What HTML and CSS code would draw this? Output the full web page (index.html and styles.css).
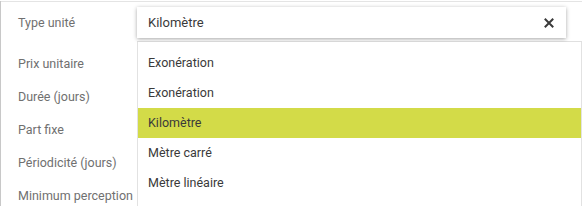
FILE: index.html
```html
<!DOCTYPE html>
<html lang="fr">
<head>
  <meta charset="UTF-8" />
  <title>Type unité</title>
  <link rel="stylesheet" href="styles.css">
</head>
<body>

<div class="form">
  <div class="row first">
    <span class="label">Type unité</span>
    <div class="field">
      <div class="select">
        <span class="value">Kilomètre</span>
        <svg class="clear" width="10" height="10" viewBox="0 0 10 10">
          <path d="M1.5 1.5 L8.5 8.5 M8.5 1.5 L1.5 8.5" stroke="#3a3a3a" stroke-width="2" stroke-linecap="square" />
        </svg>
      </div>
    </div>
  </div>
  <div class="labels">
    <span class="label">Prix unitaire</span>
    <span class="label">Durée (jours)</span>
    <span class="label">Part fixe</span>
    <span class="label">Périodicité (jours)</span>
    <span class="label">Minimum perception</span>
  </div>

  <ul class="dropdown">
    <li>Exonération</li>
    <li>Exonération</li>
    <li class="selected">Kilomètre</li>
    <li>Mètre carré</li>
    <li>Mètre linéaire</li>
  </ul>
</div>

</body>
</html>
```

FILE: styles.css
```css
html, body {
  margin: 0; padding: 0;
  font-family: Roboto, 'Liberation Sans', Arial, sans-serif;
  background: #ffffff;
  color: #333333;
  height: 100%;
  overflow: hidden;
}

.form {
  position: relative;
  height: 206px;
  border-left: 1px solid #c8c8c8;
  box-sizing: border-box;
}

.label {
  display: flex;
  align-items: center;
  padding-left: 17px;
  font-size: 12.5px;
  color: #707070;
}

.row.first {
  display: grid;
  grid-template-columns: 136px 1fr;
  height: 40px;
  margin-top: 1px;
  border-top: 1px solid #e4e4e4;
}

.row.first .field {
  border-bottom: 1px solid #e0e0e0;
  padding-top: 5px;
}

.select {
  display: flex;
  align-items: center;
  justify-content: space-between;
  height: 31px;
  width: 429px;
  padding: 0 12px 0 11px;
  box-sizing: border-box;
  background: #ffffff;
  box-shadow: 0 1px 4px rgba(0, 0, 0, 0.35);
  font-size: 13px;
  color: #3a3a3a;
}

.clear {
  display: block;
}

.labels {
  display: flex;
  flex-direction: column;
  padding-top: 5px;
}

.labels .label {
  height: 33px;
}

.dropdown {
  position: absolute;
  left: 136px;
  top: 41px;
  right: 0;
  bottom: 0;
  margin: 0;
  padding: 6px 0 0 0;
  list-style: none;
  background: #ffffff;
  border: 1px solid #e2e2e2;
  border-top: none;
}

.dropdown li {
  height: 30px;
  line-height: 30px;
  padding-left: 10px;
  font-size: 12.5px;
  color: #3a3a3a;
}

.dropdown li.selected {
  background: #d3db48;
}
```
